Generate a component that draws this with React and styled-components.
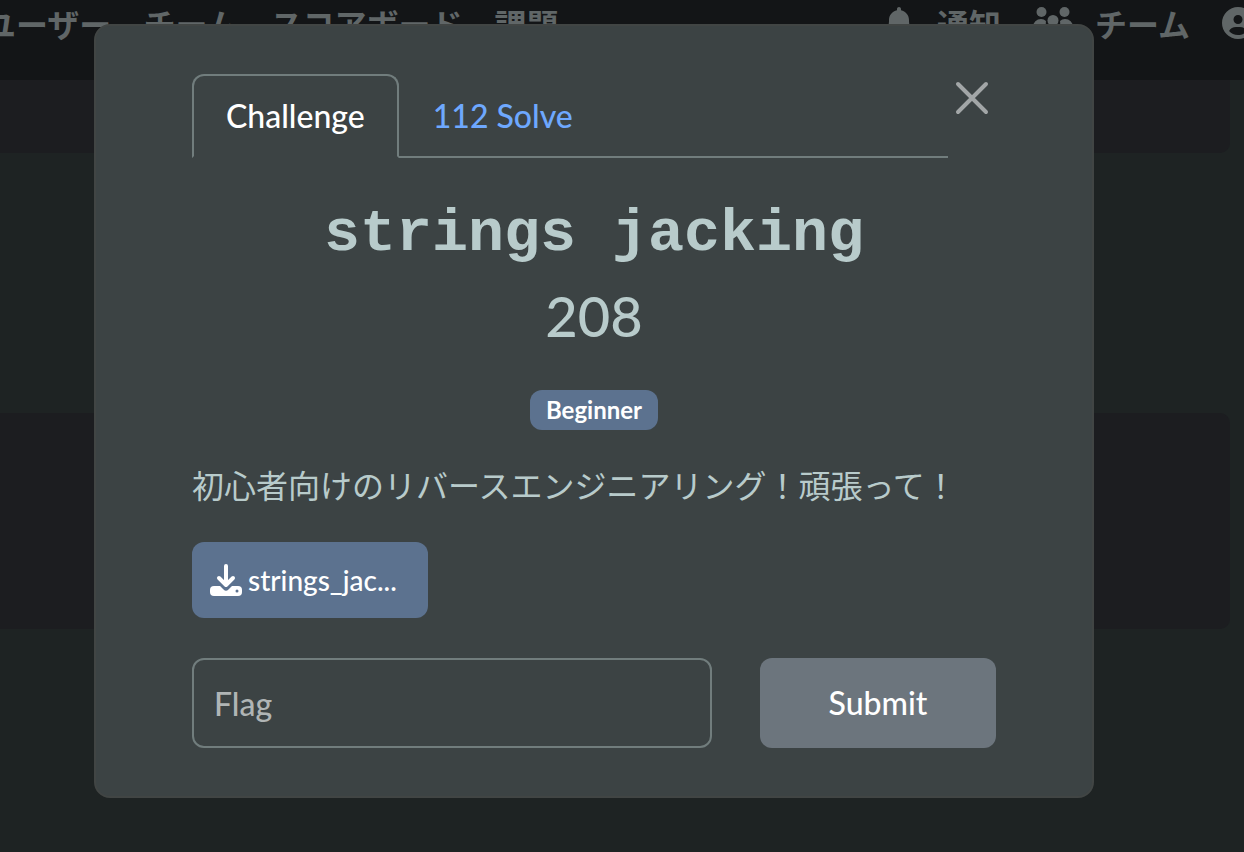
import React from "react";
import styled, { createGlobalStyle } from "styled-components";
import { FaBell, FaCircleUser } from "react-icons/fa6";

const GlobalStyle = createGlobalStyle`
  *, *::before, *::after { box-sizing: border-box; }
  body {
    margin: 0;
    background: #1e2323;
    color: #b8cbcb;
    font-family: Lato, "Noto Sans CJK JP", sans-serif;
    font-size: 32px;
    font-weight: 500;
    line-height: 48px;
    overflow: hidden;
  }
  button, input { font: inherit; }
  h2, h3, p { margin: 0; font-weight: 500; }
`;

const Page = styled.div`
  position: relative;
  min-height: 100vh;
`;

const NavBar = styled.nav`
  display: flex;
  justify-content: space-between;
  height: 80px;
  margin: 0 -10px 0 -16px;
  background: #131517;
  font-family: "Noto Sans CJK JP", sans-serif;
  font-weight: 700;
`;

const NavGroup = styled.div`
  display: flex;
  gap: 32px;
`;

const NavLink = styled.a`
  display: flex;
  align-items: center;
  gap: 22px;
  height: 46px;
  color: #606667;
  text-decoration: none;
  white-space: nowrap;
`;

const Cards = styled.div`
  display: flex;
  flex-direction: column;
  gap: 260px;
  padding-right: 14px;
`;

const Card = styled.div`
  height: ${(p) => p.$height}px;
  background: #1c1d20;
  border-radius: 0 0 10px 0;
  &:last-child { border-top-right-radius: 10px; }
`;

const Overlay = styled.div`
  position: absolute;
  inset: 0;
  padding: 24px 150px 24px 94px;
`;

const Modal = styled.section`
  padding: 48px 96px;
  border: 2px solid #414544;
  border-radius: 16px;
  background: #3c4344;
`;

const Header = styled.header`
  display: flex;
  align-items: flex-start;
`;

const Tabs = styled.div`
  display: flex;
  flex: 1;
  box-shadow: inset 0 -2px 0 #717d7d;
`;

const Tab = styled.button`
  padding: 16px 32px;
  border: 2px solid ${(p) => (p.$active ? "#717d7d" : "transparent")};
  border-bottom-color: ${(p) => (p.$active ? "#3c4344" : "transparent")};
  border-radius: 12px 12px 0 0;
  background: ${(p) => (p.$active ? "#3c4344" : "transparent")};
  color: ${(p) => (p.$active ? "#fff" : "#6ea8fe")};
`;

const Close = styled.button`
  display: flex;
  align-items: center;
  justify-content: center;
  width: 48px;
  height: 48px;
  padding: 0;
  border: 0;
  background: none;
  color: #a2a6a7;
`;

const Summary = styled.div`
  display: flex;
  flex-direction: column;
  align-items: center;
  padding-top: 36px;
`;

const Title = styled.h2`
  font: 700 60px/80px "Liberation Mono", monospace;
  white-space: nowrap;
`;

const Score = styled.h3`
  margin-top: 8px;
  font-size: 56px;
  line-height: 68px;
`;

const Badge = styled.span`
  margin-top: 40px;
  padding: 0 16px;
  border-radius: 12px;
  background: #5c728f;
  color: #fff;
  font-size: 24px;
  font-weight: 700;
  line-height: 40px;
`;

const Description = styled.p`
  margin: 32px 0;
  font-weight: 400;
  white-space: nowrap;
`;

const ChallengeForm = styled.form`
  display: grid;
  grid-template-columns: repeat(3, 1fr);
  gap: 40px 48px;
`;

const FileLink = styled.a`
  display: flex;
  align-items: center;
  gap: 6px;
  height: 76px;
  padding: 0 18px;
  border-radius: 12px;
  background: #5c728f;
  color: #fff;
  font-size: 28px;
  text-decoration: none;
`;

const FlagInput = styled.input`
  grid-row: 2;
  grid-column: span 2;
  min-width: 0;
  height: 90px;
  padding: 0 20px;
  border: 2px solid #717d7d;
  border-radius: 12px;
  background: transparent;
  color: #b8cbcb;
  &::placeholder { color: #b0b5b5; opacity: 1; }
`;

const Submit = styled.button`
  grid-row: 2;
  border: 0;
  border-radius: 12px;
  background: #6c757d;
  color: #fff;
`;

function UsersIcon() {
  return (
    <svg width="40" height="32" viewBox="0 0 40 32" fill="currentColor" aria-hidden="true">
      <circle cx="8.500" cy="5" r="5" />
      <circle cx="31.500" cy="5" r="5" />
      <circle cx="20" cy="13.500" r="5.500" />
      <path d="M0 20a8 8 0 0 1 8-8q3 0 5 2-1 5 2 8H2a2 2 0 0 1-2-2zM40 20a8 8 0 0 0-8-8q-3 0-5 2 1 5-2 8h13a2 2 0 0 0 2-2zM9 31a11 10 0 0 1 22 0z" />
    </svg>
  );
}

function DownloadIcon() {
  return (
    <svg width="32" height="32" viewBox="0 0 32 32" aria-hidden="true">
      <rect y="22" width="32" height="10" rx="4" fill="#fff" />
      <circle cx="27" cy="27" r="1.500" fill="#5c728f" />
      <path d="M8 15l8 8 8-8" fill="none" stroke="#5c728f" strokeWidth="7" strokeLinejoin="round" />
      <path d="M16 2v18M9 14l7 7 7-7" fill="none" stroke="#fff" strokeWidth="4" strokeLinecap="round" strokeLinejoin="round" />
    </svg>
  );
}

export default function App() {
  return (
    <>
      <GlobalStyle />
      <Page>
        <NavBar>
          <NavGroup>
            <NavLink href="#users">ユーザー</NavLink>
            <NavLink href="#teams">チーム</NavLink>
            <NavLink href="#scoreboard">スコアボード</NavLink>
            <NavLink href="#challenges">課題</NavLink>
          </NavGroup>
          <NavGroup>
            <NavLink href="#notifications"><FaBell size={32} />通知</NavLink>
            <NavLink href="#team"><UsersIcon />チーム</NavLink>
            <NavLink href="#profile" aria-label="Profile"><FaCircleUser size={32} /></NavLink>
          </NavGroup>
        </NavBar>
        <Cards>
          <Card $height={73} />
          <Card $height={216} />
        </Cards>
        <Overlay>
          <Modal role="dialog" aria-labelledby="challenge-title">
            <Header>
              <Tabs role="tablist">
                <Tab role="tab" aria-selected="true" $active>Challenge</Tab>
                <Tab role="tab" aria-selected="false">112 Solve</Tab>
              </Tabs>
              <Close aria-label="Close">
                <svg width="34" height="34" viewBox="0 0 34 34" stroke="currentColor" strokeWidth="4" strokeLinecap="round">
                  <path d="M3 3l28 28M31 3L3 31" />
                </svg>
              </Close>
            </Header>
            <Summary>
              <Title id="challenge-title">strings jacking</Title>
              <Score>208</Score>
              <Badge>Beginner</Badge>
            </Summary>
            <Description lang="ja">初心者向けのリバースエンジニアリング！頑張って！</Description>
            <ChallengeForm onSubmit={(e) => e.preventDefault()}>
              <FileLink href="#file"><DownloadIcon />strings_jac...</FileLink>
              <FlagInput type="text" placeholder="Flag" aria-label="Flag" />
              <Submit type="submit">Submit</Submit>
            </ChallengeForm>
          </Modal>
        </Overlay>
      </Page>
    </>
  );
}
